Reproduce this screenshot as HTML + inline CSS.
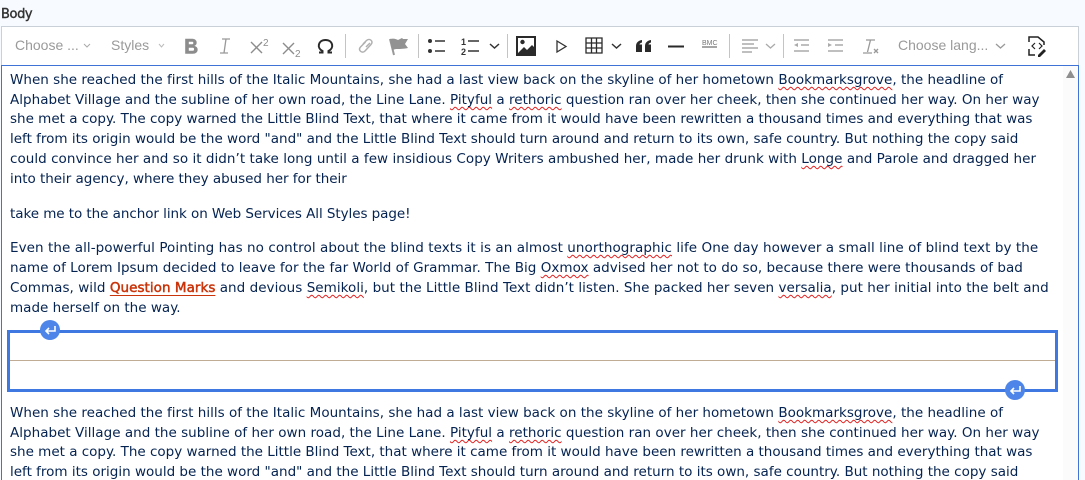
<!DOCTYPE html>
<html><head><meta charset="utf-8"><style>
html,body{margin:0;padding:0;width:1085px;height:480px;overflow:hidden;background:#f7fbff}
body{position:relative;font-family:"Liberation Sans",sans-serif}
.abs{position:absolute}
#tb{position:absolute;left:1px;top:26px;width:1076px;height:38px;background:#fff;border:1px solid #c9d0d8;border-bottom:none}
#ed{position:absolute;left:1px;top:65px;width:1076px;height:415px;background:#fff;border:1px solid #3f74d6;border-bottom:none;box-sizing:content-box}
.l{position:absolute;left:10px;white-space:nowrap;font-family:"DejaVu Sans",sans-serif;font-size:13.52px;line-height:20px;height:20px;color:#052350}
.s{text-decoration:underline wavy #e02020 1px;text-underline-offset:2px;text-decoration-skip-ink:none}
.t{position:absolute;font-size:14px;color:#9a9a9a;white-space:nowrap;line-height:16px;top:37px}
.sep{position:absolute;top:34px;width:1px;height:24px;background:#c4c4c4}
svg{position:absolute;overflow:visible}
</style></head><body>
<div class="abs" style="left:1px;top:6px;font-size:13px;font-family:'DejaVu Sans',sans-serif;color:#333;line-height:18px;-webkit-text-stroke:0.4px #333;letter-spacing:-0.4px">Body</div>
<div id="tb"></div>
<div id="ed"></div>
<div class="abs" style="left:1063px;top:66px;width:15px;height:414px;background:#fbfbfb"></div>
<div class="t" style="left:15px">Choose ...</div>
<div class="t" style="left:111px">Styles</div>
<svg style="left:0;top:0" width="1085" height="66">
<path d="M84 44l3 3 3-3" fill="none" stroke="#aaa" stroke-width="1"/>
<path d="M159 44l2.500 3 2.500-3" fill="none" stroke="#bbb" stroke-width="1"/>
<path d="M185.500 39h7c4.500 0 5.500 6 1 7c5.500 0.500 5 7.500-0.500 7.500h-7.500z M188.500 41.500v3h4c1.500 0 1.500-3 0-3z M188.500 47.500v3.500h4.500c1.800 0 1.800-3.500 0-3.500z" fill="#8c8c8c" fill-rule="evenodd" stroke="#8c8c8c" stroke-width="0.6"/>
<path d="M222 39h8M220 53h8M226 39l-2 14" fill="none" stroke="#999" stroke-width="1.300"/>
<path d="M251 42l11 11M262 42l-11 11" stroke="#8c8c8c" stroke-width="1.400"/>
<text x="263" y="46" font-family="Liberation Sans,sans-serif" font-size="10" fill="#8c8c8c">2</text>
<path d="M283 43l11 11M294 43l-11 11" stroke="#8c8c8c" stroke-width="1.400"/>
<text x="295" y="57" font-family="Liberation Sans,sans-serif" font-size="10" fill="#8c8c8c">2</text>
<path d="M319 52.500h3.500v-1.500c-6-3-4.500-11 3-11s9 8 3 11v1.500h3.500" fill="none" stroke="#2a2a2a" stroke-width="2"/>
<path d="M363 44l3.500-3.500c3-3 7.500 1 4.500 4l-6 6.500c-3 3-7.500-1-4.500-4l5-5M366 47l4-4" fill="none" stroke="#b0b0b0" stroke-width="1.500"/>
<path d="M390 39l4 16" stroke="#999" stroke-width="2"/>
<path d="M390 39c4-1 6 0 8 1l4-2 1 1 5 0-3 5 3 4c-5 1-9 1-12 1l-4 1z" fill="#929292"/>
<circle cx="430" cy="41" r="2" fill="#333"/><circle cx="430" cy="51" r="2" fill="#333"/>
<path d="M435 41h10M435 51h10" stroke="#333" stroke-width="1.500"/>
<text x="461" y="45" font-family="Liberation Sans,sans-serif" font-size="9" font-weight="bold" fill="#333">1</text>
<text x="461" y="55" font-family="Liberation Sans,sans-serif" font-size="9" font-weight="bold" fill="#333">2</text>
<path d="M468 41h11M468 51h11" stroke="#333" stroke-width="1.500"/>
<path d="M490 44l4.500 4 4.500-4" fill="none" stroke="#333" stroke-width="1.500"/>
<path d="M517 37h18v18h-18z" fill="#fff" stroke="#2a2a2a" stroke-width="2"/>
<path d="M517 54l7-7 3 3 5-5 3 3v7h-18z" fill="#2a2a2a"/><circle cx="522.500" cy="42" r="2.200" fill="#2a2a2a"/>
<path d="M557 41l9 5.500-9 5.500z" fill="none" stroke="#333" stroke-width="1.300"/>
<path d="M586 38h16v15h-16zM586 43h16M586 48h16M591.500 38v15M596.500 38v15" fill="none" stroke="#2a2a2a" stroke-width="1.300"/>
<path d="M612 44l4.500 4 4.500-4" fill="none" stroke="#333" stroke-width="1.500"/>
<path d="M636 46c0-3 2-5.500 6-6v2.500c-1.500 .5-2.500 1-2.500 2h2.500v7.500h-6zM645 46c0-3 2-5.500 6-6v2.500c-1.500 .5-2.500 1-2.500 2h2.500v7.500h-6z" fill="#2a2a2a"/>
<path d="M668 46.500h16" stroke="#2a2a2a" stroke-width="2"/>
<path d="M702 47h15" stroke="#888" stroke-width="1.500"/>
<path d="M742 40h16M742 44h12M742 48h16M742 52h10" stroke="#999" stroke-width="1.300"/>
<path d="M766 44l4.500 4 4.500-4" fill="none" stroke="#aaa" stroke-width="1.300"/>
<path d="M794 40h15M801 45h8M794 51h15" stroke="#aaa" stroke-width="1.400"/><path d="M798 43v4l-4-2z" fill="#aaa"/>
<path d="M828 40h15M835 45h8M828 51h15" stroke="#aaa" stroke-width="1.400"/><path d="M828 43v4l4-2z" fill="#aaa"/>
<path d="M866 40h9M870.500 40l-3 12M863 53h9" fill="none" stroke="#999" stroke-width="1.300"/><path d="M874 49l4 4M878 49l-4 4" stroke="#999" stroke-width="1.300"/>
<path d="M996 44l4.500 4 4.500-4" fill="none" stroke="#999" stroke-width="1.300"/>
<path d="M1029 42v-5h9l6 5v3M1029 49v6h6" fill="none" stroke="#222" stroke-width="1.500"/>
<path d="M1035 43l-3 3 3 3M1039 43l3 3-3 3" fill="none" stroke="#222" stroke-width="1.200"/>
<path d="M1038 55l6-6 2 2-6 6h-2z" fill="#222"/>
<text x="702" y="45" font-family="Liberation Sans,sans-serif" font-size="7" fill="#777">BMC</text>
</svg>
<div class="sep" style="left:345px"></div>
<div class="sep" style="left:418px"></div>
<div class="sep" style="left:507px"></div>
<div class="sep" style="left:729px"></div>
<div class="sep" style="left:783px"></div>
<div class="t" style="left:898px">Choose lang...</div>
<svg style="left:0;top:0" width="1085" height="80"><path d="M1066 78l4.500-8 4.500 8z" fill="#8f8f8f"/></svg>

<div class="l" style="top:70px;letter-spacing:.007px">When she reached the first hills of the Italic Mountains, she had a last view back on the skyline of her hometown <span class="s">Bookmarksgrove</span>, the headline of</div>
<div class="l" style="top:90px;letter-spacing:.013px">Alphabet Village and the subline of her own road, the Line Lane. <span class="s">Pityful</span> a <span class="s">rethoric</span> question ran over her cheek, then she continued her way. On her way</div>
<div class="l" style="top:109px;letter-spacing:-.013px">she met a copy. The copy warned the Little Blind Text, that where it came from it would have been rewritten a thousand times and everything that was</div>
<div class="l" style="top:129px;letter-spacing:-.007px">left from its origin would be the word "and" and the Little Blind Text should turn around and return to its own, safe country. But nothing the copy said</div>
<div class="l" style="top:149px;letter-spacing:.033px">could convince her and so it didn’t take long until a few insidious Copy Writers ambushed her, made her drunk with <span class="s">Longe</span> and Parole and dragged her</div>
<div class="l" style="top:169px;letter-spacing:-.04px">into their agency, where they abused her for their</div>
<div class="l" style="top:204px;letter-spacing:-.068px">take me to the anchor link on Web Services All Styles page!</div>
<div class="l" style="top:238px;letter-spacing:.06px">Even the all-powerful Pointing has no control about the blind texts it is an almost <span class="s">unorthographic</span> life One day however a small line of blind text by the</div>
<div class="l" style="top:258px;letter-spacing:.028px">name of Lorem Ipsum decided to leave for the far World of Grammar. The Big <span class="s">Oxmox</span> advised her not to do so, because there were thousands of bad</div>
<div class="l" style="top:278px;letter-spacing:.033px">Commas, wild <span style="color:#c9340a;-webkit-text-stroke:0.5px #c9340a;text-decoration:underline;text-underline-offset:3px">Question Marks</span> and devious <span class="s">Semikoli</span>, but the Little Blind Text didn’t listen. She packed her seven <span class="s">versalia</span>, put her initial into the belt and</div>
<div class="l" style="top:298px">made herself on the way.</div>

<div class="abs" style="left:7px;top:330px;width:1045px;height:56px;border:3px solid #3f78e0"></div>
<div class="abs" style="left:10px;top:360px;width:1045px;height:1px;background:#c0ab94"></div>
<svg style="left:0;top:0" width="1085" height="480">
<circle cx="50" cy="330" r="10" fill="#4d86e8"/>
<path d="M55 326v5h-8M49 328l-3 3 3 3" fill="none" stroke="#fff" stroke-width="1.600"/>
<circle cx="1015" cy="390" r="10" fill="#4d86e8"/>
<path d="M1020 386v5h-8M1014 388l-3 3 3 3" fill="none" stroke="#fff" stroke-width="1.600"/>
</svg>

<div class="l" style="top:403px;letter-spacing:.007px">When she reached the first hills of the Italic Mountains, she had a last view back on the skyline of her hometown <span class="s">Bookmarksgrove</span>, the headline of</div>
<div class="l" style="top:423px;letter-spacing:.013px">Alphabet Village and the subline of her own road, the Line Lane. <span class="s">Pityful</span> a <span class="s">rethoric</span> question ran over her cheek, then she continued her way. On her way</div>
<div class="l" style="top:442px;letter-spacing:-.013px">she met a copy. The copy warned the Little Blind Text, that where it came from it would have been rewritten a thousand times and everything that was</div>
<div class="l" style="top:462px;letter-spacing:-.007px">left from its origin would be the word "and" and the Little Blind Text should turn around and return to its own, safe country. But nothing the copy said</div>
</body></html>
